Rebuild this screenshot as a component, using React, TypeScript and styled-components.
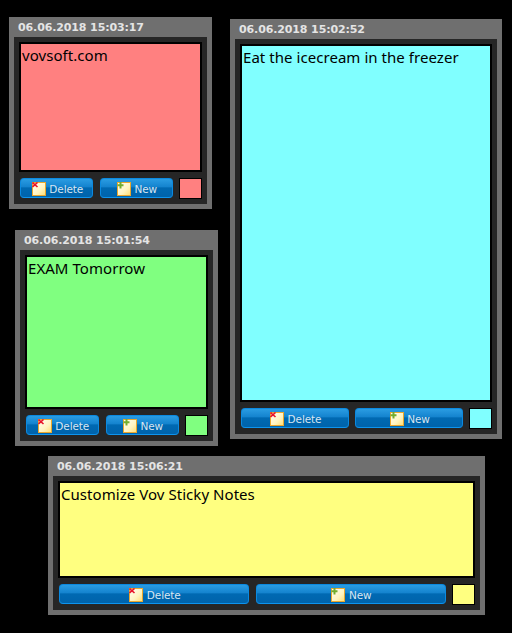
import React from "react";
import styled, { createGlobalStyle } from "styled-components";

const Global = createGlobalStyle`
  html, body { margin: 0; padding: 0; background: #000; }
  #root { width: 512px; height: 633px; }
`;

const Desktop = styled.div`
  position: relative;
  width: 512px;
  height: 633px;
  background: #000;
  overflow: hidden;
`;

const Window = styled.section<{ $x: number; $y: number; $w: number; $h: number }>`
  position: absolute;
  left: ${(p) => p.$x}px;
  top: ${(p) => p.$y}px;
  width: ${(p) => p.$w}px;
  height: ${(p) => p.$h}px;
  box-sizing: border-box;
  background: #6f6f6f;
  padding: 0 5px 5px;
  display: flex;
  flex-direction: column;
`;

const TitleBar = styled.div`
  height: 20px;
  box-sizing: border-box;
  flex: none;
  display: flex;
  align-items: center;
  padding: 1px 4px 0;
  color: #e4e4e4;
  font: bold 11px "DejaVu Sans", Verdana, sans-serif;
  letter-spacing: -0.12px;
`;

const Panel = styled.div`
  flex: 1;
  min-height: 0;
  background: #262626;
  padding: 5px;
  display: flex;
  flex-direction: column;
  gap: 6px;
`;

const NoteText = styled.div<{ $color: string }>`
  flex: 1;
  min-height: 0;
  box-sizing: border-box;
  background: ${(p) => p.$color};
  border: 2px solid #000;
  padding: 2px 1px;
  color: #000;
  font: 15px/18px "Noto Sans", "DejaVu Sans", sans-serif;
  letter-spacing: 0.05px;
`;

const Footer = styled.div`
  flex: none;
  height: 21px;
  display: flex;
  align-items: flex-start;
  gap: 6.5px;
  padding-left: 1px;
`;

const ActionButton = styled.button`
  flex: 1;
  min-width: 0;
  height: 20px;
  box-sizing: border-box;
  padding: 2px 0 0 2px;
  border: 1px solid #0b8ae0;
  border-bottom-color: #0d94ee;
  border-radius: 4px;
  background: linear-gradient(#2a9ce2 0%, #1584cf 42%, #0069b2 50%, #0063ab 100%);
  color: #d8e6f2;
  font: 10.5px "DejaVu Sans", Tahoma, sans-serif;
  letter-spacing: -0.1px;
  display: flex;
  align-items: center;
  justify-content: center;
  gap: 3.5px;
`;

const Swatch = styled.div<{ $color: string }>`
  flex: none;
  width: 23px;
  height: 21px;
  box-sizing: border-box;
  border: 1px solid #000;
  background: ${(p) => p.$color};
`;

const NoteIcon = ({ kind }: { kind: "delete" | "new" }) => (
  <svg width="14" height="14" viewBox="0 0 14 14" aria-hidden="true">
    <defs>
      <linearGradient id={`paper-${kind}`} x1="0" y1="0" x2="1" y2="1">
        <stop offset="0" stopColor="#fffef4" />
        <stop offset="0.6" stopColor="#fff4c0" />
        <stop offset="1" stopColor="#ffdd70" />
      </linearGradient>
    </defs>
    <rect x="0.5" y="0.5" width="13" height="13" fill={`url(#paper-${kind})`} stroke="#eaa72e" />
    {kind === "delete" ? (
      <path d="M0.5 0.5 L5.5 5 M5.5 0.5 L0.5 5" stroke="#e8152a" strokeWidth="1.6" fill="none" />
    ) : (
      <path d="M3.5 0 V6.5 M0.5 3.2 H6.5" stroke="#74ad2e" strokeWidth="2" fill="none" />
    )}
  </svg>
);

type Note = { x: number; y: number; w: number; h: number; date: string; text: string; color: string };

const notes: Note[] = [
  { x: 9, y: 17, w: 203, h: 192, date: "06.06.2018 15:03:17", text: "vovsoft.com", color: "#ff8080" },
  { x: 230, y: 19, w: 272, h: 420, date: "06.06.2018 15:02:52", text: "Eat the icecream in the freezer", color: "#80ffff" },
  { x: 15, y: 230, w: 203, h: 216, date: "06.06.2018 15:01:54", text: "EXAM Tomorrow", color: "#80ff80" },
  { x: 48, y: 456, w: 437, h: 159, date: "06.06.2018 15:06:21", text: "Customize Vov Sticky Notes", color: "#ffff80" },
];

export default function App() {
  return (
    <Desktop>
      <Global />
      {notes.map((n) => (
        <Window key={n.date} $x={n.x} $y={n.y} $w={n.w} $h={n.h}>
          <TitleBar>{n.date}</TitleBar>
          <Panel>
            <NoteText $color={n.color}>{n.text}</NoteText>
            <Footer>
              <ActionButton>
                <NoteIcon kind="delete" />
                Delete
              </ActionButton>
              <ActionButton>
                <NoteIcon kind="new" />
                New
              </ActionButton>
              <Swatch $color={n.color} />
            </Footer>
          </Panel>
        </Window>
      ))}
    </Desktop>
  );
}
